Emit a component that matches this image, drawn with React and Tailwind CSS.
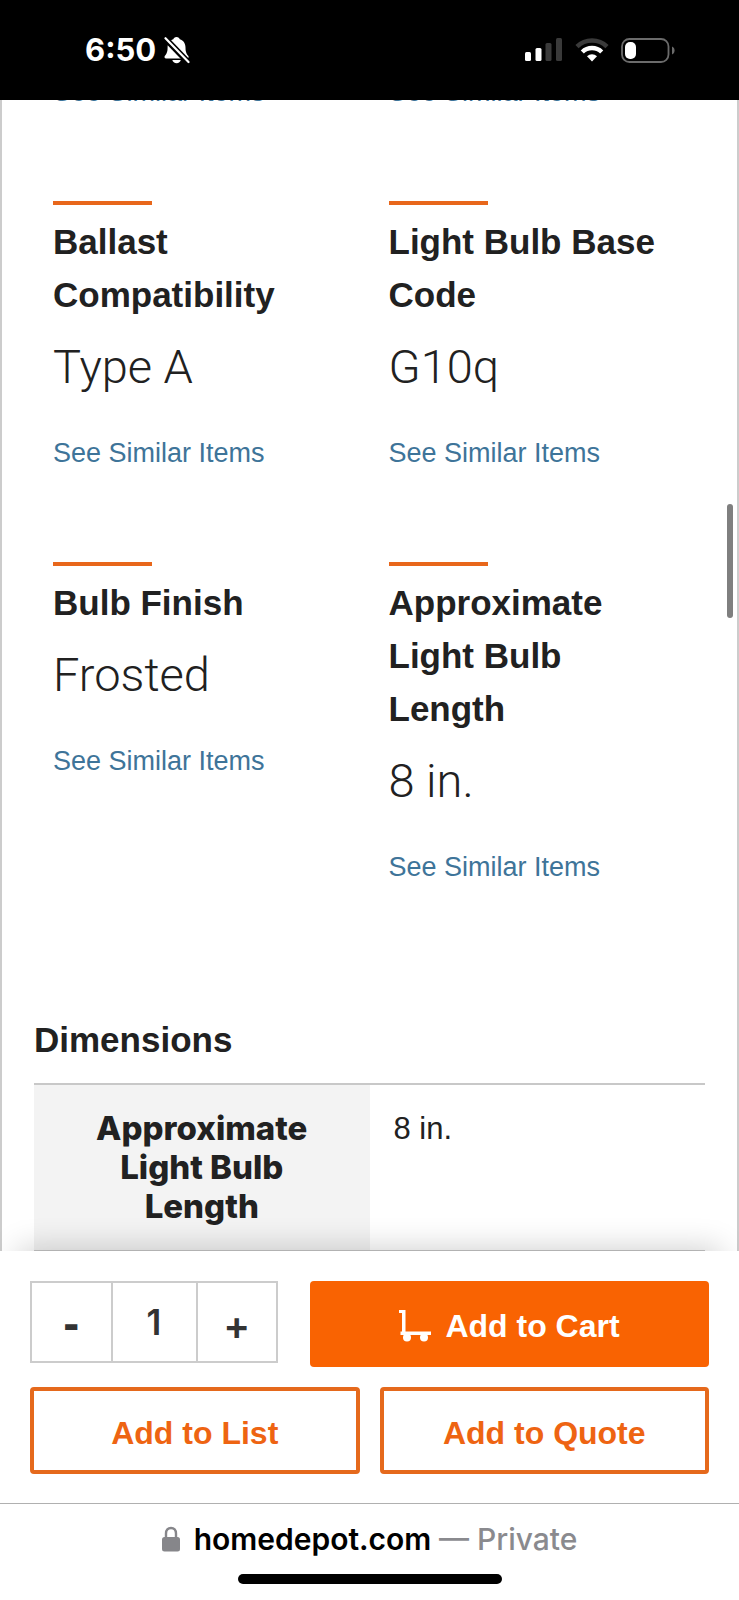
import React, { useState } from "react";

const specs = [
    { name: "Ballast Compatibility", value: "Type A" },
    { name: "Light Bulb Base Code", value: "G10q" },
    { name: "Bulb Finish", value: "Frosted" },
    { name: "Approximate Light Bulb Length", value: "8 in." }
];

function BellOffIcon() {
    return (
        <svg className="w-[26px] h-[28px]" viewBox="0 0 26 28" fill="#fff" aria-hidden="true">
            <path d="M12.500 1c1.900 0 3 1 3.300 2.300 3.700 1.200 5.700 4.300 5.700 8.200 0 5 1.300 6.500 2.700 8.300.9 1.200.4 2.700-1.200 2.700H2.200C.5 22.500 0 21 .9 19.800c1.400-1.800 2.700-3.300 2.700-8.300 0-3.900 2-7 5.700-8.200C9.600 2 10.700 1 12.500 1z" />
            <path d="M8.300 24h8.500c-.4 2-2.100 3.200-4.200 3.200S8.700 26 8.300 24z" />
            <path d="M0 1.200L24.500 26.500" stroke="#000" strokeWidth="6" />
            <path d="M1.500 2.200L24.500 26" stroke="#fff" strokeWidth="2.200" strokeLinecap="round" />
        </svg>
    );
}

function SignalIcon() {
    return (
        <svg className="w-[38px] h-6" viewBox="0 0 38 24" aria-hidden="true">
            <rect x="0" y="14" width="6" height="9" rx="1.500" fill="#fff" />
            <rect x="10.500" y="10" width="6" height="13" rx="1.500" fill="#fff" />
            <rect x="20.500" y="5" width="6" height="18" rx="1.500" fill="#3a3a3a" />
            <rect x="31" y="0" width="6" height="23" rx="1.500" fill="#3a3a3a" />
        </svg>
    );
}

function WifiIcon() {
    return (
        <svg className="w-[34px] h-6" viewBox="0 0 34 24" fill="none" aria-hidden="true">
            <path d="M2 8.700A21.500 21.500 0 0 1 32 8.700" stroke="#3a3a3a" strokeWidth="4.500" />
            <path d="M7.300 14A14 14 0 0 1 26.700 14" stroke="#fff" strokeWidth="4.500" />
            <path d="M17 23.500l-5-5.200a7.200 7.200 0 0 1 10 0z" fill="#fff" />
        </svg>
    );
}

function BatteryIcon() {
    return (
        <svg className="w-[54px] h-[25px]" viewBox="0 0 54 25" aria-hidden="true">
            <rect x="1" y="1" width="46.500" height="23" rx="7.500" fill="none" stroke="#6b6b6b" strokeWidth="1.800" />
            <rect x="4" y="4" width="11" height="17" rx="5" fill="#fff" />
            <path d="M51 8.500c3.400 1.200 3.400 6.800 0 8z" fill="#6b6b6b" />
        </svg>
    );
}

function DollyIcon() {
    return (
        <svg className="w-8 h-8" viewBox="0 0 32 32" fill="#fff" aria-hidden="true">
            <path d="M0 0h6.500v21.500H32v3.500H1.500v-3.500H3V3H0z" />
            <circle cx="8" cy="27.500" r="4" />
            <circle cx="25" cy="27.500" r="4" />
        </svg>
    );
}

function LockIcon() {
    return (
        <svg className="w-[18px] h-[26px]" viewBox="0 0 18 26" aria-hidden="true">
            <path d="M4 13V7.500C4 3.900 6 2 9 2s5 1.900 5 5.500V13" fill="none" stroke="#86868a" strokeWidth="2.400" />
            <rect x="0" y="11" width="18" height="14.500" rx="2.500" fill="#86868a" />
        </svg>
    );
}

function SimilarLink() {
    return (
        <a href="#similar" className="block text-[27px] leading-10 text-[#3e7499]">
            See Similar Items
        </a>
    );
}

export default function App() {
    const [quantity, setQuantity] = useState(1);

    return (
        <div className="h-screen flex flex-col bg-white text-[#212121] font-['Liberation_Sans',Arial,sans-serif]">
            {/* Status bar */}
            <header className="h-[100px] shrink-0 bg-black text-white flex items-center justify-between pl-[85px] pr-16 font-['Inter',sans-serif]">
                <div className="flex items-center gap-2">
                    <span className="text-[31px] leading-10 font-bold">6:50</span>
                    <BellOffIcon />
                </div>
                <div className="flex items-center gap-3">
                    <SignalIcon />
                    <WifiIcon />
                    <BatteryIcon />
                </div>
            </header>

            {/* Product specs */}
            <main className="relative flex-1 min-h-0 overflow-hidden border-x-2 border-[#cccccc] px-8">
                <div className="grid grid-cols-2 gap-y-[89px] -mt-7">
                    <div className="pl-[19px]">
                        <SimilarLink />
                    </div>
                    <div className="pl-[19px]">
                        <SimilarLink />
                    </div>
                    {specs.map((spec) => (
                        <section key={spec.name} className="pl-[19px] pr-8">
                            <div className="w-[99px] h-1 bg-[#e8671b]" />
                            <h3 className="mt-2.5 text-[35px] leading-[53px] font-bold">{spec.name}</h3>
                            <p className="mt-2.5 mb-[30px] text-[47px] leading-[72px] font-light font-['Roboto',sans-serif]">
                                {spec.value}
                            </p>
                            <SimilarLink />
                        </section>
                    ))}
                </div>

                <h2 className="mt-[126px] mb-[17px] text-[35px] leading-[53px] font-bold">Dimensions</h2>
                <table className="w-full table-fixed border-collapse">
                    <tbody>
                        <tr className="border-t-2 border-b border-[#c8c8c8] align-top">
                            <th scope="row" className="w-1/2 bg-[#f3f3f3] px-12 py-6 text-center text-[33px] leading-[39px] font-extrabold font-['Inter',sans-serif]">
                                Approximate Light Bulb Length
                            </th>
                            <td className="px-6 py-6 text-[31px] leading-[39px]">8 in.</td>
                        </tr>
                    </tbody>
                </table>

                <div className="absolute right-1 top-[404px] w-1.5 h-[114px] rounded-full bg-[#7f7f7f]" />
            </main>

            {/* Buy box */}
            <div className="relative shrink-0 bg-white px-[30px] pt-[30px] pb-[29px] shadow-[0_-20px_30px_-18px_rgba(0,0,0,0.2)]">
                <div className="flex items-start gap-8">
                    <div className="flex w-[248px] h-[82px] border-2 border-[#cccccc] text-[#333333]">
                        <button
                            type="button"
                            aria-label="Decrease quantity"
                            className="flex-1 pt-1 text-[48px] leading-10 font-bold"
                            onClick={() => setQuantity(Math.max(1, quantity - 1))}
                        >
                            -
                        </button>
                        <input
                            aria-label="Quantity"
                            className="w-[87px] border-x-2 border-[#cccccc] text-center text-[35px] font-semibold font-['Inter',sans-serif]"
                            value={quantity}
                            onChange={(e) => setQuantity(Number(e.target.value) || 1)}
                        />
                        <button
                            type="button"
                            aria-label="Increase quantity"
                            className="flex-1 pt-2 text-[40px] leading-10 font-semibold font-['Inter',sans-serif]"
                            onClick={() => setQuantity(quantity + 1)}
                        >
                            +
                        </button>
                    </div>
                    <button
                        type="button"
                        className="flex-1 h-[86px] pt-1 flex items-center justify-center gap-3.5 rounded-[4px] bg-[#f96302] text-white text-[32px] font-bold"
                    >
                        <DollyIcon />
                        Add to Cart
                    </button>
                </div>
                <div className="grid grid-cols-2 gap-5 mt-5">
                    <button type="button" className="h-[87px] pt-1 rounded-[4px] border-4 border-[#e5691c] text-[#ee6412] text-[32px] font-bold">
                        Add to List
                    </button>
                    <button type="button" className="h-[87px] pt-1 rounded-[4px] border-4 border-[#e5691c] text-[#ee6412] text-[32px] font-bold">
                        Add to Quote
                    </button>
                </div>
            </div>

            {/* Browser bar */}
            <footer className="shrink-0 h-[97px] border-t border-[#b0b0b0] flex flex-col items-center justify-between pt-[15px] pb-4 font-['Inter',sans-serif]">
                <div className="flex items-center gap-3.5 text-[30px] leading-10">
                    <LockIcon />
                    <p className="text-black font-semibold">
                        homedepot.com <span className="text-[#8a8a8e] font-medium">— Private</span>
                    </p>
                </div>
                <div className="w-[264px] h-2.5 rounded-full bg-black" />
            </footer>
        </div>
    );
}
